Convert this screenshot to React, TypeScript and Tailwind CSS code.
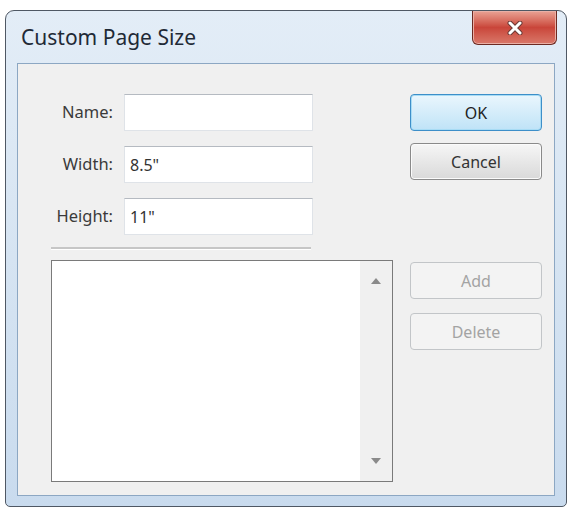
import React from 'react';

const font = { fontFamily: '"Noto Sans", "Open Sans", Arial, sans-serif' };

function Field({ label, value }: { label: string; value?: string }) {
  return (
    <div className="flex items-center">
      <span className="w-[95px] text-right text-[16.5px] text-[#3a3a3a]">{label}</span>
      <div className="ml-[11px] flex h-[37px] w-[189px] items-center border border-[#dfe3e8] border-t-[#b5bac1] bg-white px-[5px] text-[16px] text-[#333]">
        {value}
      </div>
    </div>
  );
}

function DlgButton({ label, kind }: { label: string; kind: 'default' | 'normal' | 'disabled' }) {
  const cls =
    kind === 'default'
      ? 'border-[#3d8fc9] bg-gradient-to-b from-[#eaf6fd] to-[#bfe3f7] text-[#222] shadow-[inset_0_0_0_1px_#a8dcf5]'
      : kind === 'normal'
        ? 'border-[#8a8a8a] bg-gradient-to-b from-[#f6f6f6] to-[#d9d9d9] text-[#333] shadow-[inset_0_0_0_1px_#fbfbfb]'
        : 'border-[#c2c5c8] bg-[#f3f3f3] text-[#a3a3a3]';
  return (
    <div className={`flex h-[37px] w-[132px] items-center justify-center rounded-[4px] border text-[16px] ${cls}`}>
      {label}
    </div>
  );
}

export default function App() {
  return (
    <div className="min-h-screen bg-white pl-[5px] pt-[10px]" style={font}>
      <div className="flex h-[497px] w-[562px] flex-col rounded-t-[9px] rounded-b-[5px] border border-[#4f5864] bg-gradient-to-b from-[#e3edf7] via-[#d6e4f2] to-[#c9dbee]">
        {/* title bar */}
        <div className="flex h-[52px] items-start justify-between">
          <span className="pl-[15px] pt-[13px] text-[21px] leading-[27px] text-[#1f2a36]">Custom Page Size</span>
          <div className="mr-[9px] flex h-[34px] w-[85px] items-center justify-center rounded-b-[6px] border border-t-0 border-[#6d2a22] bg-gradient-to-b from-[#e9a295] via-[#c9453a] to-[#d9786a] shadow-[inset_0_0_0_1px_#eab0a6]">
            <svg width="18" height="14" viewBox="0 0 18 14">
              <path d="M4 2 L14 12 M14 2 L4 12" stroke="#6b3a35" strokeWidth="5" strokeLinecap="round" />
              <path d="M4 2 L14 12 M14 2 L4 12" stroke="#ffffff" strokeWidth="3" strokeLinecap="round" />
            </svg>
          </div>
        </div>

        {/* client area */}
        <div className="mx-[11px] mb-[10px] flex flex-1 border border-[#8ca7c3] bg-[#f0f0f0]">
          <div className="w-[375px]">
            <div className="mt-[30px] flex flex-col gap-[15px]">
              <Field label="Name:" />
              <Field label="Width:" value={'8.5"'} />
              <Field label="Height:" value={'11"'} />
            </div>
            <div className="ml-[33px] mt-[12px] h-[3px] w-[260px] border-t-2 border-[#c6c6c6] border-b border-b-white" />
            <div className="ml-[33px] mt-[10px] flex h-[222px] border border-[#7a7a7a] bg-white">
              <div className="flex-1" />
              <div className="flex w-[32px] flex-col items-center justify-between bg-[#f0f0f0] py-[17px]">
                <svg width="10" height="6" viewBox="0 0 10 6">
                  <path d="M0 6 L5 0 L10 6 Z" fill="#8a8a8a" />
                </svg>
                <svg width="10" height="6" viewBox="0 0 10 6">
                  <path d="M0 0 L5 6 L10 0 Z" fill="#8a8a8a" />
                </svg>
              </div>
            </div>
          </div>
          <div className="ml-[17px] flex flex-col pt-[30px]">
            <DlgButton label="OK" kind="default" />
            <div className="mt-[12px]">
              <DlgButton label="Cancel" kind="normal" />
            </div>
            <div className="mt-[82px]">
              <DlgButton label="Add" kind="disabled" />
            </div>
            <div className="mt-[14px]">
              <DlgButton label="Delete" kind="disabled" />
            </div>
          </div>
        </div>
      </div>
    </div>
  );
}
